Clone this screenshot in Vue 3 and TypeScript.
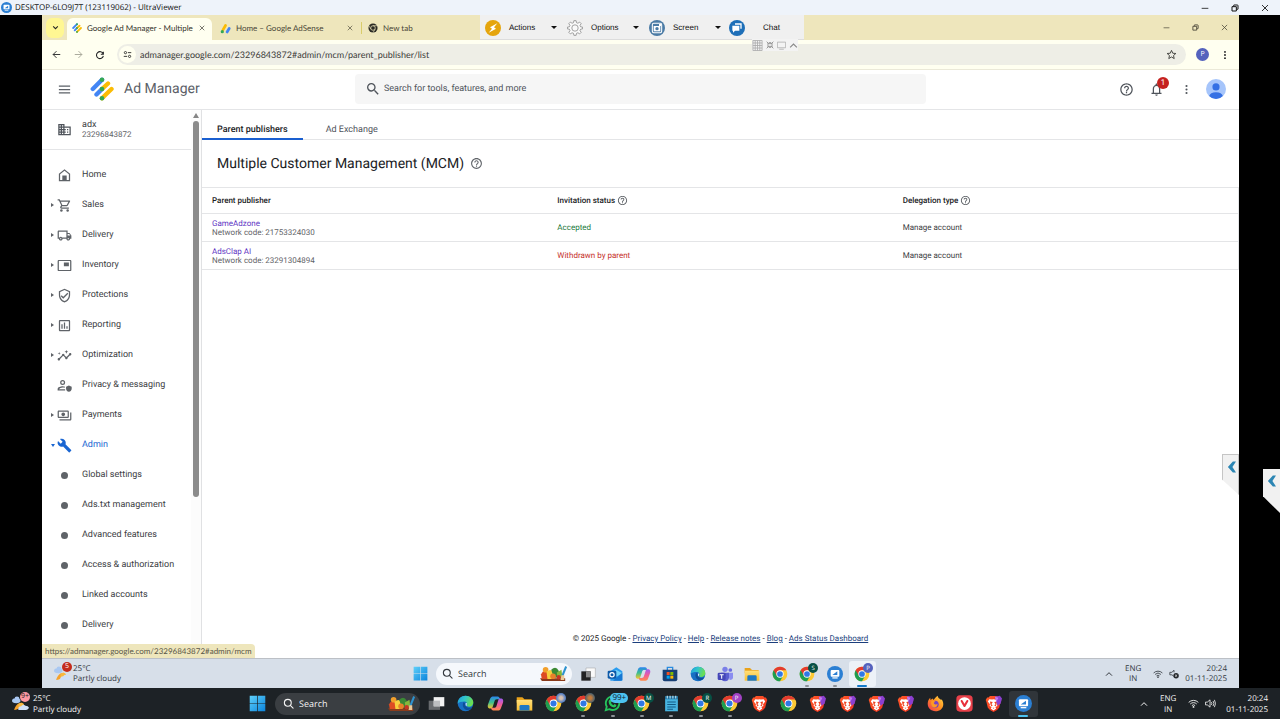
<script setup lang="ts">
import { ref } from 'vue'

interface NavItem { label: string; icon?: string; caret?: boolean; open?: boolean }
interface TaskApp { icon: string; name: string; badge?: string; badgeClass?: string; running?: boolean; active?: boolean }
interface Publisher { name: string; code: string; status: string; ok: boolean; delegation: string }

const navItems: NavItem[] = [
  { label: 'Home', icon: 'home' },
  { label: 'Sales', icon: 'cart', caret: true },
  { label: 'Delivery', icon: 'truck', caret: true },
  { label: 'Inventory', icon: 'inventory', caret: true },
  { label: 'Protections', icon: 'shield', caret: true },
  { label: 'Reporting', icon: 'report', caret: true },
  { label: 'Optimization', icon: 'insights', caret: true },
  { label: 'Privacy & messaging', icon: 'privacy' },
  { label: 'Payments', icon: 'payments', caret: true },
  { label: 'Admin', icon: 'build', open: true },
  { label: 'Global settings' },
  { label: 'Ads.txt management' },
  { label: 'Advanced features' },
  { label: 'Access & authorization' },
  { label: 'Linked accounts' },
  { label: 'Delivery' },
]

const publishers: Publisher[] = [
  { name: 'GameAdzone', code: '21753324030', status: 'Accepted', ok: true, delegation: 'Manage account' },
  { name: 'AdsClap AI', code: '23291304894', status: 'Withdrawn by parent', ok: false, delegation: 'Manage account' },
]

const footerLinks = ['Privacy Policy', 'Help', 'Release notes', 'Blog', 'Ads Status Dashboard']

const viewerTools = [
  { label: 'Actions', icon: 'bolt', menu: true },
  { label: 'Options', icon: 'gear', menu: true },
  { label: 'Screen', icon: 'camera', menu: true },
  { label: 'Chat', icon: 'chat', menu: false },
]

const remoteApps: TaskApp[] = [
  { icon: 'taskview', name: 'Task view' },
  { icon: 'outlook', name: 'Outlook' },
  { icon: 'copilot', name: 'Copilot' },
  { icon: 'store', name: 'Store' },
  { icon: 'edge', name: 'Edge' },
  { icon: 'teams', name: 'Teams' },
  { icon: 'folder', name: 'File Explorer' },
  { icon: 'chrome', name: 'Chrome' },
  { icon: 'chrome', name: 'Chrome', badge: 'S', badgeClass: 'green', running: true },
  { icon: 'viewer', name: 'UltraViewer', running: true },
  { icon: 'chrome', name: 'Chrome', badge: 'P', badgeClass: 'indigo', active: true },
]

const hostApps: TaskApp[] = [
  { icon: 'taskview-dark', name: 'Task view' },
  { icon: 'edge', name: 'Edge' },
  { icon: 'copilot', name: 'Copilot' },
  { icon: 'folder', name: 'File Explorer' },
  { icon: 'chrome', name: 'Chrome', badge: ' ', badgeClass: 'photo' },
  { icon: 'chrome', name: 'Chrome', badge: ' ', badgeClass: 'photo warm', running: true },
  { icon: 'whatsapp', name: 'WhatsApp', badge: '99+', badgeClass: 'count', running: true },
  { icon: 'chrome', name: 'Chrome', badge: 'M', badgeClass: 'green', running: true },
  { icon: 'notepad', name: 'Notepad', running: true },
  { icon: 'chrome', name: 'Chrome', badge: 'R', badgeClass: 'green', running: true },
  { icon: 'chrome', name: 'Chrome', badge: 'P', badgeClass: 'purple', running: true },
  { icon: 'brave', name: 'Brave' },
  { icon: 'chrome', name: 'Chrome' },
  { icon: 'brave-alt', name: 'Brave' },
  { icon: 'brave-alt', name: 'Brave' },
  { icon: 'brave-alt', name: 'Brave' },
  { icon: 'brave-alt', name: 'Brave' },
  { icon: 'firefox', name: 'Firefox' },
  { icon: 'vivaldi', name: 'Vivaldi' },
  { icon: 'brave-alt', name: 'Brave' },
  { icon: 'viewer', name: 'UltraViewer', active: true },
]

const address = ref('admanager.google.com/23296843872#admin/mcm/parent_publisher/list')
const query = ref('')
const remoteQuery = ref('')
const hostQuery = ref('')
</script>

<template>
  <div class="screen">
    <svg class="sprite" aria-hidden="true">
      <defs>
        <linearGradient id="g-win" x1="0" y1="0" x2="1" y2="1"><stop offset="0" stop-color="#5fd0fa" /><stop offset="1" stop-color="#0b84dc" /></linearGradient>
        <linearGradient id="g-edge" x1="0" y1="0" x2="1" y2="0.3"><stop offset="0" stop-color="#1e9de0" /><stop offset="0.5" stop-color="#32c6c9" /><stop offset="1" stop-color="#6ade52" /></linearGradient>
        <linearGradient id="g-cop1" x1="0" y1="0" x2="0" y2="1"><stop offset="0" stop-color="#2a84f0" /><stop offset="0.5" stop-color="#3cbf8e" /><stop offset="1" stop-color="#f6c52c" /></linearGradient>
        <linearGradient id="g-cop2" x1="0" y1="0" x2="0" y2="1"><stop offset="0" stop-color="#a05df0" /><stop offset="0.5" stop-color="#ef5a9c" /><stop offset="1" stop-color="#ff8a4a" /></linearGradient>
        <linearGradient id="g-fox" x1="1" y1="0" x2="0" y2="1"><stop offset="0" stop-color="#ffe14a" /><stop offset="0.5" stop-color="#ff8a1e" /><stop offset="1" stop-color="#f0325c" /></linearGradient>
        <linearGradient id="g-brave" x1="0" y1="0" x2="1" y2="1"><stop offset="0" stop-color="#ff5a2a" /><stop offset="1" stop-color="#f0301c" /></linearGradient>
        <linearGradient id="g-folder" x1="0" y1="0" x2="0" y2="1"><stop offset="0" stop-color="#ffe07a" /><stop offset="1" stop-color="#f9be32" /></linearGradient>
      </defs>
      <symbol id="i-menu" viewBox="0 0 24 24"><path d="M3 5.500h18v2H3zm0 5.500h18v2H3zm0 5.500h18v2H3z" /></symbol>
      <symbol id="i-search" viewBox="0 0 24 24"><path d="M15.5 14h-.79l-.28-.27A6.47 6.47 0 0 0 16 9.5 6.5 6.5 0 1 0 9.5 16c1.61 0 3.09-.59 4.23-1.57l.27.28v.79l5 4.99L20.49 19l-4.99-5zm-6 0C7.01 14 5 11.99 5 9.5S7.01 5 9.5 5 14 7.01 14 9.5 11.99 14 9.5 14z" /></symbol>
      <symbol id="i-find" viewBox="0 0 24 24"><g fill="none" stroke="currentColor" stroke-width="2.4" stroke-linecap="round"><circle cx="10.5" cy="10.5" r="7.5" /><path d="m16 16 6 6" /></g></symbol>
      <symbol id="i-help" viewBox="0 0 24 24"><path d="M11 18h2v-2h-2v2zm1-16C6.48 2 2 6.48 2 12s4.480 10 10 10 10-4.480 10-10S17.520 2 12 2zm0 18c-4.410 0-8-3.590-8-8s3.590-8 8-8 8 3.590 8 8-3.590 8-8 8zm0-14c-2.210 0-4 1.790-4 4h2c0-1.100.9-2 2-2s2 .9 2 2c0 2-3 1.750-3 5h2c0-2.250 3-2.500 3-5 0-2.210-1.790-4-4-4z" /></symbol>
      <symbol id="i-bell" viewBox="0 0 24 24"><path d="M12 22c1.100 0 2-.9 2-2h-4c0 1.100.9 2 2 2zm6-5v-6c0-3.070-1.630-5.640-4.500-6.320V4c0-.83-.67-1.500-1.500-1.500s-1.500.67-1.500 1.500v.68C7.640 5.360 6 7.920 6 11v6H4v2h16v-2h-2zm-2 0H8v-6c0-2.480 1.510-4.500 4-4.500s4 2.020 4 4.500v6z" /></symbol>
      <symbol id="i-more" viewBox="0 0 24 24"><circle cx="12" cy="4.500" r="2.300" /><circle cx="12" cy="12" r="2.300" /><circle cx="12" cy="19.500" r="2.300" /></symbol>
      <symbol id="i-domain" viewBox="0 0 24 24"><path d="M12 7V3H2v18h20V7H12zM6 19H4v-2h2v2zm0-4H4v-2h2v2zm0-4H4V9h2v2zm0-4H4V5h2v2zm4 12H8v-2h2v2zm0-4H8v-2h2v2zm0-4H8V9h2v2zm0-4H8V5h2v2zm10 12h-8v-2h2v-2h-2v-2h2v-2h-2V9h8v10zm-2-8h-2v2h2v-2zm0 4h-2v2h2v-2z" /></symbol>
      <symbol id="i-home" viewBox="0 0 24 24"><path d="M12 2 3 9v12h18V9zm7 17H5V10l7-5.500 7 5.500z" /><path d="M8.500 12h7v8h-7z" /></symbol>
      <symbol id="i-cart" viewBox="0 0 24 24"><path d="M15.550 13c.75 0 1.410-.41 1.750-1.030l3.580-6.490A.996.996 0 0 0 20.010 4H5.210l-.94-2H1v2h2l3.600 7.590-1.350 2.440C4.520 15.370 5.480 17 7 17h12v-2H7l1.100-2h7.450zM6.160 6h12.150l-2.760 5H8.530L6.160 6z" /><circle cx="7" cy="20" r="2" /><circle cx="17" cy="20" r="2" /></symbol>
      <symbol id="i-truck" viewBox="0 0 24 24"><path d="M20 8h-3V4H3c-1.100 0-2 .9-2 2v11h2c0 1.660 1.340 3 3 3s3-1.340 3-3h6c0 1.660 1.340 3 3 3s3-1.340 3-3h2v-5l-3-4zm-.5 1.500l1.960 2.500H17V9.500h2.500zM6 18c-.55 0-1-.45-1-1s.45-1 1-1 1 .45 1 1-.45 1-1 1zm2.220-3c-.55-.61-1.330-1-2.220-1s-1.670.39-2.220 1H3V6h12v9H8.220zM18 18c-.55 0-1-.45-1-1s.45-1 1-1 1 .45 1 1-.45 1-1 1z" /></symbol>
      <symbol id="i-inventory" viewBox="0 0 24 24"><path d="M19 7h-8v6h8V7zm2-4H3c-1.100 0-2 .9-2 2v14c0 1.100.9 1.980 2 1.980h18c1.100 0 2-.88 2-1.980V5c0-1.100-.9-2-2-2zm0 16.010H3V4.980h18v14.030z" /></symbol>
      <symbol id="i-shield" viewBox="0 0 24 24"><path d="M12 1 3 5v6c0 5.550 3.840 10.740 9 12 5.160-1.260 9-6.450 9-12V5l-9-4zm7 10c0 4.520-2.980 8.690-7 9.930-4.020-1.240-7-5.410-7-9.930V6.300l7-3.110 7 3.110V11zm-11.590.59L6 13l4 4 8-8-1.410-1.420L10 14.170z" /></symbol>
      <symbol id="i-report" viewBox="0 0 24 24"><path d="M19 3H5c-1.100 0-2 .9-2 2v14c0 1.100.9 2 2 2h14c1.100 0 2-.9 2-2V5c0-1.100-.9-2-2-2zm0 16H5V5h14v14zM7 10h2v7H7zm4-3h2v10h-2zm4 6h2v4h-2z" /></symbol>
      <symbol id="i-insights" viewBox="0 0 24 24"><path d="M21 8c-1.450 0-2.260 1.440-1.930 2.510l-3.550 3.560c-.3-.09-.74-.09-1.040 0l-2.550-2.550C12.270 10.450 11.460 9 10 9c-1.450 0-2.270 1.440-1.930 2.520l-4.560 4.550C2.440 15.740 1 16.550 1 18c0 1.100.9 2 2 2 1.450 0 2.260-1.440 1.930-2.510l4.550-4.560c.3.09.74.09 1.040 0l2.550 2.550C12.730 16.550 13.540 18 15 18c1.450 0 2.270-1.440 1.930-2.520l3.560-3.550C21.560 12.260 23 11.450 23 10c0-1.100-.9-2-2-2zM15 9l.94-2.070L18 6l-2.060-.93L15 3l-.92 2.070L12 6l2.080.93zM3.500 11 4 9l2-.5L4 8l-.5-2L3 8l-2 .5L3 9z" /></symbol>
      <symbol id="i-privacy" viewBox="0 0 24 24"><path d="M9 3a4 4 0 1 0 0 8 4 4 0 0 0 0-8zm0 2a2 2 0 1 1 0 4 2 2 0 0 1 0-4zM9 13c-3 0-8 1.500-8 4.500V20h12v-2H3.200c.5-1.500 3.500-3 5.800-3 1 0 2 .2 3 .6l1-1.800C11.700 13.300 10.300 13 9 13z" /><path d="m19 12 4.500 1.800v3.200c0 2.300-1.800 4.300-4.500 5-2.700-.7-4.500-2.700-4.500-5v-3.200z" /></symbol>
      <symbol id="i-payments" viewBox="0 0 24 24"><path d="M19 14V6c0-1.100-.9-2-2-2H3c-1.100 0-2 .9-2 2v8c0 1.100.9 2 2 2h14c1.100 0 2-.9 2-2zm-2 0H3V6h14v8zm-7-7c-1.660 0-3 1.340-3 3s1.340 3 3 3 3-1.340 3-3-1.340-3-3-3zm13 0v11c0 1.100-.9 2-2 2H4v-2h17V7h2z" /></symbol>
      <symbol id="i-build" viewBox="0 0 24 24"><path d="M22.700 19l-9.100-9.100c.9-2.300.4-5-1.500-6.900-2-2-5-2.400-7.400-1.300L9 6 6 9 1.600 4.700C.4 7.100.9 10.100 2.900 12.100c1.900 1.900 4.600 2.400 6.900 1.500l9.100 9.100c.4.400 1 .4 1.400 0l2.300-2.300c.5-.4.5-1.100.1-1.400z" /></symbol>
      <symbol id="i-star" viewBox="0 0 24 24"><path fill="none" stroke="currentColor" stroke-width="2" d="m12 3 2.700 6.200 6.800.6-5.100 4.500 1.500 6.600L12 17.400l-5.900 3.500 1.500-6.600-5.100-4.500 6.800-.6z" /></symbol>
      <symbol id="i-back" viewBox="0 0 24 24"><path fill="none" stroke="currentColor" stroke-width="2.400" d="M22 12H3m9-9-9 9 9 9" /></symbol>
      <symbol id="i-forward" viewBox="0 0 24 24"><path fill="none" stroke="currentColor" stroke-width="2.200" d="M2 12h19m-9-9 9 9-9 9" /></symbol>
      <symbol id="i-reload" viewBox="0 0 24 24"><path fill="none" stroke="currentColor" stroke-width="2.600" d="M20 4v6h-6m5.500-1A8.300 8.300 0 1 0 20 14" /></symbol>
      <symbol id="i-tune" viewBox="0 0 24 24"><g fill="none" stroke="currentColor" stroke-width="2.600"><circle cx="6.500" cy="7" r="3" /><path d="M13 7h9M2 17h9" /><circle cx="17.500" cy="17" r="3" /></g></symbol>
      <symbol id="i-down" viewBox="0 0 24 24"><path fill="none" stroke="currentColor" stroke-width="3.500" d="m4 8 8 8 8-8" /></symbol>
      <symbol id="i-up" viewBox="0 0 24 24"><path fill="none" stroke="currentColor" stroke-width="3" d="m3 17 9-9 9 9" /></symbol>
      <symbol id="i-close" viewBox="0 0 24 24"><path fill="none" stroke="currentColor" stroke-width="2.600" d="m3 3 18 18M21 3 3 21" /></symbol>
      <symbol id="i-min" viewBox="0 0 24 24"><path fill="none" stroke="currentColor" stroke-width="2.400" d="M2 13h20" /></symbol>
      <symbol id="i-restore" viewBox="0 0 24 24"><path fill="none" stroke="currentColor" stroke-width="3" d="M3 8h13v13H3zM8 7V4q0-1 1-1h10q2 0 2 2v10q0 1-1 1h-3" /></symbol>
      <symbol id="i-wifi" viewBox="0 0 24 24"><g fill="none" stroke="currentColor" stroke-width="2"><path d="M1.500 9.500a15 15 0 0 1 21 0M5 13a10 10 0 0 1 14 0M8.500 16.500a5 5 0 0 1 7 0" /></g><circle cx="12" cy="19.500" r="2" fill="currentColor" /></symbol>
      <symbol id="i-sound" viewBox="0 0 24 24"><g fill="none" stroke="currentColor" stroke-width="1.800"><path d="M1 9h4l6-5v16l-6-5H1zM14 9q2 3 0 6M17.500 6.500q4 5.500 0 11M20.500 4q5 8 0 16" /></g></symbol>
      <symbol id="i-muted" viewBox="0 0 24 24"><path fill="none" stroke="currentColor" stroke-width="2" d="M11 17 7 14H2V8h5l5-5v5" /><circle cx="17" cy="16" r="6.500" fill="#24282c" /><path stroke="#fff" stroke-width="1.600" d="m14.500 13.500 5 5m0-5-5 5" /></symbol>
      <symbol id="i-admanager" viewBox="0 0 24 24"><g stroke-width="4.400" stroke-linecap="round"><path stroke="#4285f4" d="M12 2.800 2.800 12M12 12l-5.500 5.500" /><path stroke="#fbbc04" d="M12 12l6-5.500M12 21.300l9.500-9.300" /></g><g fill="#34a853"><circle cx="12" cy="2.800" r="2.300" /><circle cx="12" cy="12" r="2.300" /><circle cx="12" cy="21.300" r="2.300" /></g></symbol>
      <symbol id="i-adsense" viewBox="0 0 24 24"><g stroke-width="6" stroke-linecap="round"><path stroke="#fbbc04" d="M6.500 15 12 5.500" /><path stroke="#4285f4" d="M15.500 19.500 20 12" /></g><circle cx="5" cy="19" r="3.500" fill="#34a853" /></symbol>
      <symbol id="i-newtab" viewBox="0 0 24 24"><circle cx="12" cy="12" r="11" fill="#2b2b25" /><circle cx="12" cy="12" r="5.500" fill="none" stroke="#eee6bc" stroke-width="1.800" /><path stroke="#eee6bc" stroke-width="1.500" d="M12 6.500h10M7 15 2.500 7M17 15l-5 8" /></symbol>
      <symbol id="i-user" viewBox="0 0 24 24"><circle cx="12" cy="12" r="12" fill="#a6c5fb" /><circle cx="12" cy="9.500" r="4.300" fill="#3570e4" /><path fill="#3570e4" d="M3.800 20.500Q5 15.800 12 15.800t8.200 4.700Q17 24 12 24t-8.200-3.500z" /></symbol>
      <symbol id="i-bolt" viewBox="0 0 24 24"><circle cx="12" cy="12" r="12" fill="#e5a50e" /><path fill="#fff" d="m18.500 5-11 6 3 2-5 6 11-6-3-2z" /></symbol>
      <symbol id="i-gear" viewBox="0 0 24 24"><path fill="#fafafa" stroke="#777" stroke-width="1" stroke-linejoin="round" d="M10.300 1h3.400l.5 3 2.200.9 2.500-1.800 2.400 2.400-1.800 2.500.9 2.200 3 .5v2.600l-3 .5-.9 2.200 1.800 2.500-2.400 2.400-2.500-1.800-2.200.9-.5 3h-3.400l-.5-3-2.200-.9-2.500 1.800-2.400-2.400 1.800-2.500-.9-2.200-3-.5v-2.600l3-.5.9-2.200-1.800-2.500 2.400-2.400 2.500 1.800 2.200-.9z" /><circle cx="12" cy="12" r="4.800" fill="none" stroke="#777" /></symbol>
      <symbol id="i-camera" viewBox="0 0 24 24"><circle cx="12" cy="12" r="12" fill="#4b7ba5" /><rect x="5" y="5" width="14" height="14" rx="2" fill="none" stroke="#fff" stroke-width="1.600" /><path fill="#fff" d="M7 9h10v8H7z" /><circle cx="12" cy="13" r="2.500" fill="#4b7ba5" /><path fill="#fff" d="M15 6h3v3h-3z" /></symbol>
      <symbol id="i-chat" viewBox="0 0 24 24"><circle cx="12" cy="12" r="12" fill="#1e6fb8" /><path fill="#fff" d="M9 5h10v8h-2V7H9zM5 8.500h10.500V16H9l-3 3v-3H5z" /></symbol>
      <symbol id="i-viewer" viewBox="0 0 24 24"><circle cx="12" cy="12" r="12" fill="#2b7fd3" /><rect x="5.500" y="6" width="13" height="10" rx="1.500" fill="#fff" /><path fill="#2b7fd3" d="M8 13.500 15.500 8v5.500z" /><path fill="#fff" d="M8 17h8v1.800H8z" /></symbol>
      <symbol id="i-grid" viewBox="0 0 24 24"><path fill="none" stroke="#aaa" stroke-width="1.800" d="M2 1h20v22H2zM2 6.500h20M2 12h20M2 17.500h20M7 1v22M12 1v22M17 1v22" /></symbol>
      <symbol id="i-expand" viewBox="0 0 24 24"><path fill="none" stroke="#999" stroke-width="3" d="m2 2 7 7m6 6 7 7M22 2l-7 7m-6 6-7 7M3 9h7V3m11 6h-7V3M3 15h7v6m11-6h-7v6" /></symbol>
      <symbol id="i-monitor" viewBox="0 0 24 24"><path fill="none" stroke="#aaa" stroke-width="2" d="M1 3h22v15H1zm5 19h12" /></symbol>
      <symbol id="i-win" viewBox="0 0 24 24"><path fill="url(#g-win)" d="M1 1h10.500v10.500H1zm11.500 0H23v10.500H12.500zM1 12.500h10.500V23H1zm11.500 0H23V23H12.500z" /></symbol>
      <symbol id="i-taskview" viewBox="0 0 24 24"><path fill="#fafafa" stroke="#999" stroke-width=".7" d="M9 3h14v14H9z" /><path fill="#222" d="M2 8h14v14H2z" /><path fill="#888" d="M9 8h7v9H9z" /></symbol>
      <symbol id="i-taskview-dark" viewBox="0 0 24 24"><path fill="#686b6e" d="M1 8h16v13H1z" /><path fill="#f2f2f2" d="M8 3h15v13H8z" /><path fill="#bdbfc1" d="M8 8h9v8H8z" /></symbol>
      <symbol id="i-edge" viewBox="0 0 24 24"><circle cx="12" cy="12" r="11" fill="#1770c4" /><path fill="url(#g-edge)" d="M1 12C1 5 6 1 12 1c7 0 11 5 11 9.500 0 4-3 6-6 6-2.500 0-3.500-1-3-2 1-1.500.5-5.500-4-5.500-4 0-8 1-9 3z" /><path fill="#0e4f99" d="M9.500 10C7 13 8 19 13 21c4 1 7-1 8.500-4-5 2.500-11 0-10-5z" /><path fill="#eaf6ff" d="M12 12c1-1.500 2-.5 2 .5-.5 1.500-.8 2.700 0 3.300l-1.500-.8z" /></symbol>
      <symbol id="i-copilot" viewBox="0 0 24 24"><path fill="url(#g-cop1)" d="M9 2h6c2 0 3 2 3.500 4H14c-2 0-3 1-3.500 3L8 17c-.5 1.500-1.500 2-3 2-4 0-4.500-3-3.500-6L4.500 5C5.300 2.800 7 2 9 2z" /><path fill="url(#g-cop2)" d="M15 22H9c-2 0-3-2-3.500-4H10c2 0 3-1 3.500-3L16 7c.5-1.500 1.500-2 3-2 4 0 4.500 3 3.500 6l-3 8c-.8 2.200-2.500 3-4.500 3z" /></symbol>
      <symbol id="i-folder" viewBox="0 0 24 24"><path fill="#e9a21b" d="M1 3h8l3 3h10v5H1z" /><path fill="url(#g-folder)" d="M1 7h22v15H1z" /><path fill="#1d78c4" d="M5 16q0-2 2-2h10q2 0 2 2v6H5z" /></symbol>
      <symbol id="i-store" viewBox="0 0 24 24"><path fill="none" stroke="#2b8ce0" stroke-width="2" d="M8 6V2h8v4" /><path fill="#173f74" d="M1 5.500h22V20q0 3-3 3H4q-3 0-3-3z" /><path fill="#f25022" d="M7 9h4.500v4.500H7z" /><path fill="#7fba00" d="M12.500 9H17v4.500h-4.500z" /><path fill="#00a4ef" d="M7 14.500h4.500V19H7z" /><path fill="#ffb900" d="M12.500 14.500H17V19h-4.500z" /></symbol>
      <symbol id="i-outlook" viewBox="0 0 24 24"><path fill="#2a9df0" d="M5 8 14 2l9 6v14H5z" /><path fill="#73d2f8" d="m6 9 8-3 9 5-9 5z" /><path fill="#1677d2" d="m23 10-14 12h12q2 0 2-2z" /><rect x="1" y="7" width="13" height="12" rx="2" fill="#0c59a8" /><circle cx="7.500" cy="13" r="3.200" fill="none" stroke="#fff" stroke-width="1.800" /></symbol>
      <symbol id="i-teams" viewBox="0 0 24 24"><circle cx="12" cy="5" r="4" fill="#7a7fe8" /><circle cx="20" cy="6" r="2.800" fill="#6a6ce0" /><path fill="#8a8df0" d="M16 10h8v7q0 4-5 4z" /><path fill="#5b5fd0" d="M6 10h12v7q0 6-6 6t-6-6z" /><rect x="1" y="10" width="12" height="11" rx="2" fill="#4446b8" /><path stroke="#fff" stroke-width="1.600" d="M4 13h6m-3 0v6" /></symbol>
      <symbol id="i-chrome" viewBox="0 0 24 24"><circle cx="12" cy="12" r="11" fill="#fcc934" /><path fill="#1e9e50" d="M2.470 6.500A11 11 0 0 0 12 23l4.760-8.250L12 12z" /><path fill="#e33b2e" d="M2.470 6.500A11 11 0 0 1 21.530 6.500H12l-4.760 8.250z" /><circle cx="12" cy="12" r="5.500" fill="#fff" /><circle cx="12" cy="12" r="4.300" fill="#2f78e6" /></symbol>
      <symbol id="i-whatsapp" viewBox="0 0 24 24"><path fill="none" stroke="#25c45c" stroke-width="2.600" d="m2.500 21.500 1.400-5A9.500 9.500 0 1 1 7.500 20z" /><path fill="#25c45c" d="M8 6.500 10 7l1 2.500-1.200 1.500q1.200 2.300 3.500 3.300l1.500-1.500 2.700 1.200q0 3.500-3.500 3.500Q7 16 6.500 9.500 6.500 7.500 8 6.500z" /></symbol>
      <symbol id="i-notepad" viewBox="0 0 24 24"><path fill="#48b4e0" d="M3 2h18v21H3z" /><path fill="#1e6f9e" d="M3 2h18v4H3z" /><path stroke="#d6f1fb" stroke-width="1.400" d="M6 1v4m4-4v4m4-4v4m4-4v4" /><path stroke="#125b86" stroke-width="1.500" d="M6 10h12M6 13.500h12M6 17h12M6 20h8" /></symbol>
      <symbol id="i-brave" viewBox="0 0 24 24"><path fill="url(#g-brave)" d="m7 1.500 10 0 2 2h2l2 3.500-1 3-2 8-3 3-5 3-5-3-3-3-2-8-1-3L3 3.500h2z" /><path fill="#fff" d="m6 6 4 .5 2-.5 2 .5 4-.5 2 3-3 4 .5 2.500-3 1.500L16 19l-4 3-4-3 1.500-2-3-1.500.5-2.500-3-4z" /><path fill="#f0401e" d="m7 9 4 1-2 3 2 1.500-2 1.500L8 14zm10 0-4 1 2 3-2 1.500 2 1.500 1-2zm-6.500 9h3L12 19.500z" /></symbol>
      <symbol id="i-brave-alt" viewBox="0 0 24 24"><use href="#i-brave" /><path fill="#8b3fd0" d="M14 2.500 21 1l3 4-2 7-4 3-2-5z" /><path fill="#c27af0" d="m14 2.500 5 1.500-3 6z" /></symbol>
      <symbol id="i-firefox" viewBox="0 0 24 24"><path fill="url(#g-fox)" d="M12 23C5.500 23 1 18.500 1 12.500 1 9 2.500 6 4.500 4L5 7l3-2 1 2c1.500-1 2.500-4 6-6 0 3 3 4 5 6l.5-1c1.500 2 2.500 4 2.500 7 0 6-5 10-11 10z" /><circle cx="11.500" cy="13" r="5" fill="#7542c8" /><path fill="#ff9a24" d="M6 9c3-2 5-.5 6 1-3 0-3 2-1 3 1.500 1 3 .5 4-.5 0 4-3 5.500-5 5-3-.5-5-4-4-8.500z" /></symbol>
      <symbol id="i-vivaldi" viewBox="0 0 24 24"><rect x="0.500" y="0.500" width="23" height="23" rx="5" fill="#e8404a" /><circle cx="12" cy="12" r="9" fill="#fff" /><path fill="none" stroke="#e8303c" stroke-width="3" stroke-linecap="round" stroke-linejoin="round" d="m8 8.500 4 7 4-7" /></symbol>
      <symbol id="i-weather" viewBox="0 0 24 24"><path fill="#f5a22c" d="M3 21c2-6 5-10 11-10-1 5-4 10-11 10z" /><circle cx="13" cy="15" r="4" fill="#f8b840" /><g fill="#a9c8f2"><ellipse cx="6" cy="8" rx="6" ry="3.500" /><circle cx="7" cy="5.500" r="3.500" /></g><path fill="#cfdff8" d="M9 21q-1-5 4-5 2-4 6-1 4 0 5 3-1 3-4 3z" /></symbol>
      <symbol id="i-feast" viewBox="0 0 30 16"><path fill="#8a3b1c" d="M0 13h27v3H2z" /><path fill="#dd4b24" d="M1 9q3-6 7-2l2 7H2z" /><circle cx="6" cy="4" r="3" fill="#f2a02c" /><path fill="#f7cf3f" d="M7 6q5-4 8 1l-2 7H8z" /><path fill="#3b8a35" d="M12 4q5-5 8 1l1 6-6 2z" /><path fill="#86b83c" d="m18 7 5-3 1 8-5 2z" /><circle cx="14" cy="11" r="3" fill="#e8812a" /><circle cx="20" cy="12" r="2.300" fill="#c73525" /><path fill="#2d92cf" d="m27 0 2 1-4 10-2-1z" /><path fill="#ecc894" d="M23 10h3v5h-4z" /></symbol>
      <symbol id="i-chev" viewBox="0 0 10 12"><path fill="#2c86b4" d="M6.500 0H10L6 6l4 6H6.500L1 6z" /></symbol>
    </svg>

    <header class="titlebar">
      <svg class="s11"><use href="#i-viewer" /></svg>
      <span class="title-text">DESKTOP-6LO9J7T (123119062) - UltraViewer</span>
      <div class="win-buttons">
        <button type="button" aria-label="Minimize"><svg class="s8"><use href="#i-min" /></svg></button>
        <button type="button" aria-label="Restore"><svg class="s8"><use href="#i-restore" /></svg></button>
        <button type="button" aria-label="Close"><svg class="s8"><use href="#i-close" /></svg></button>
      </div>
    </header>

    <section class="remote">
      <div class="tabstrip">
        <button type="button" class="tab-search" aria-label="Search tabs"><svg class="s7"><use href="#i-down" /></svg></button>
        <div class="tab active">
          <svg class="s10"><use href="#i-admanager" /></svg>
          <span class="tab-title">Google Ad Manager - Multiple</span>
          <button type="button" aria-label="Close tab"><svg class="s6"><use href="#i-close" /></svg></button>
        </div>
        <div class="tab second">
          <svg class="s11"><use href="#i-adsense" /></svg>
          <span class="tab-title">Home – Google AdSense</span>
          <button type="button" aria-label="Close tab"><svg class="s6"><use href="#i-close" /></svg></button>
        </div>
        <div class="tab third">
          <svg class="s10"><use href="#i-newtab" /></svg>
          <span class="tab-title">New tab</span>
        </div>
        <div class="win-buttons narrow">
          <button type="button" aria-label="Minimize"><svg class="s7"><use href="#i-min" /></svg></button>
          <button type="button" aria-label="Restore"><svg class="s7"><use href="#i-restore" /></svg></button>
          <button type="button" aria-label="Close"><svg class="s7"><use href="#i-close" /></svg></button>
        </div>
      </div>

      <div class="toolbar">
        <button type="button" class="nav-btn" aria-label="Back"><svg class="s9"><use href="#i-back" /></svg></button>
        <button type="button" class="nav-btn dim" aria-label="Forward"><svg class="s9"><use href="#i-forward" /></svg></button>
        <button type="button" class="nav-btn" aria-label="Reload"><svg class="s10"><use href="#i-reload" /></svg></button>
        <div class="omnibox">
          <button type="button" class="site-info" aria-label="Site information"><svg class="s9"><use href="#i-tune" /></svg></button>
          <input v-model="address" type="text" aria-label="Address" />
          <button type="button" aria-label="Bookmark"><svg class="s11"><use href="#i-star" /></svg></button>
        </div>
        <button type="button" class="profile" aria-label="Profile">P</button>
        <button type="button" class="chrome-menu" aria-label="Menu"><svg class="s10"><use href="#i-more" /></svg></button>
      </div>

      <div class="viewer-bar">
        <div v-for="tool in viewerTools" :key="tool.label" class="tool" :class="{ last: !tool.menu }">
          <button type="button"><svg class="s16"><use :href="'#i-' + tool.icon" /></svg><span>{{ tool.label }}</span></button>
          <i v-if="tool.menu" class="drop"></i>
        </div>
      </div>
      <div class="viewer-mini">
        <svg class="s11"><use href="#i-grid" /></svg>
        <svg class="s8"><use href="#i-expand" /></svg>
        <svg class="s9"><use href="#i-monitor" /></svg>
        <svg class="s9"><use href="#i-up" /></svg>
      </div>

      <div class="app-header">
        <div class="brand">
          <button type="button" aria-label="Main menu"><svg class="s15"><use href="#i-menu" /></svg></button>
          <svg class="s24"><use href="#i-admanager" /></svg>
          <span>Ad Manager</span>
        </div>
        <label class="app-search">
          <svg class="s16"><use href="#i-search" /></svg>
          <input v-model="query" type="text" placeholder="Search for tools, features, and more" aria-label="Search for tools, features, and more" />
        </label>
        <div class="header-actions">
          <button type="button" aria-label="Help"><svg class="s15"><use href="#i-help" /></svg></button>
          <button type="button" aria-label="Notifications"><svg class="s15"><use href="#i-bell" /></svg><span class="alert">1</span></button>
          <button type="button" aria-label="More"><svg class="s11"><use href="#i-more" /></svg></button>
          <button type="button" aria-label="Account"><svg class="s20"><use href="#i-user" /></svg></button>
        </div>
      </div>

      <div class="app-body">
        <aside class="sidebar">
          <div class="side-content">
            <div class="account">
              <svg class="s15"><use href="#i-domain" /></svg>
              <div><p>adx</p><p class="code">23296843872</p></div>
            </div>
            <nav>
              <a v-for="(item, index) in navItems" :key="index" href="#" :class="{ open: item.open }">
                <i class="caret" :class="{ shown: item.caret, down: item.open }"></i>
                <svg v-if="item.icon" class="s15"><use :href="'#i-' + item.icon" /></svg>
                <i v-else class="dot"></i>
                <span>{{ item.label }}</span>
              </a>
            </nav>
          </div>
          <div class="scroll-track"><i class="scroll-arrow"></i><i class="scroll-thumb"></i></div>
        </aside>

        <main>
          <div class="page-tabs" role="tablist">
            <button type="button" role="tab" aria-selected="true">Parent publishers</button>
            <button type="button" role="tab" aria-selected="false">Ad Exchange</button>
          </div>
          <h1>Multiple Customer Management (MCM) <svg class="s13"><use href="#i-help" /></svg></h1>
          <table>
            <thead>
              <tr>
                <th>Parent publisher</th>
                <th>Invitation status <svg class="s11"><use href="#i-help" /></svg></th>
                <th>Delegation type <svg class="s11"><use href="#i-help" /></svg></th>
              </tr>
            </thead>
            <tbody>
              <tr v-for="row in publishers" :key="row.code">
                <td><a href="#">{{ row.name }}</a><p>Network code: {{ row.code }}</p></td>
                <td :class="row.ok ? 'ok' : 'bad'">{{ row.status }}</td>
                <td>{{ row.delegation }}</td>
              </tr>
            </tbody>
          </table>
          <footer>© 2025 Google<template v-for="link in footerLinks" :key="link"> - <a href="#">{{ link }}</a></template></footer>
        </main>
      </div>

      <div class="status-bubble">https://admanager.google.com/23296843872#admin/mcm</div>
      <button type="button" class="flap inner" aria-label="Show panel"><svg class="chev"><use href="#i-chev" /></svg></button>

      <div class="taskbar light">
        <div class="weather">
          <span class="w-icon"><svg class="s17"><use href="#i-weather" /></svg><b>5</b></span>
          <div><p>25°C</p><p>Partly cloudy</p></div>
        </div>
        <div class="task-center">
          <button type="button" aria-label="Start" class="start"><svg class="s15"><use href="#i-win" /></svg></button>
          <label class="task-search">
            <svg class="s11"><use href="#i-find" /></svg>
            <input v-model="remoteQuery" type="text" placeholder="Search" aria-label="Search remote desktop" />
            <svg class="feast"><use href="#i-feast" /></svg>
          </label>
          <div class="apps">
            <button v-for="(app, index) in remoteApps" :key="index" type="button" :aria-label="app.name" :class="{ running: app.running, active: app.active }">
              <svg class="s16"><use :href="'#i-' + app.icon" /></svg>
              <span v-if="app.badge" class="badge" :class="app.badgeClass">{{ app.badge }}</span>
            </button>
          </div>
        </div>
        <div class="tray">
          <svg class="s8"><use href="#i-up" /></svg>
          <div class="lang"><p>ENG</p><p>IN</p></div>
          <svg class="s10"><use href="#i-wifi" /></svg>
          <svg class="s10"><use href="#i-muted" /></svg>
          <div class="clock"><p>20:24</p><p>01-11-2025</p></div>
        </div>
      </div>
    </section>

    <div class="taskbar dark">
      <div class="weather">
        <span class="w-icon"><svg class="s17"><use href="#i-weather" /></svg><b>9+</b></span>
        <div><p>25°C</p><p>Partly cloudy</p></div>
      </div>
      <div class="task-center">
        <button type="button" aria-label="Start" class="start"><svg class="s17"><use href="#i-win" /></svg></button>
        <label class="task-search">
          <svg class="s11"><use href="#i-find" /></svg>
          <input v-model="hostQuery" type="text" placeholder="Search" aria-label="Search this computer" />
          <svg class="feast"><use href="#i-feast" /></svg>
        </label>
        <div class="apps">
          <button v-for="(app, index) in hostApps" :key="index" type="button" :aria-label="app.name" :class="{ running: app.running, active: app.active }">
            <svg class="s17"><use :href="'#i-' + app.icon" /></svg>
            <span v-if="app.badge" class="badge" :class="app.badgeClass">{{ app.badge }}</span>
          </button>
        </div>
      </div>
      <div class="tray">
        <svg class="s8"><use href="#i-up" /></svg>
        <div class="lang"><p>ENG</p><p>IN</p></div>
        <svg class="s11"><use href="#i-wifi" /></svg>
        <svg class="s11"><use href="#i-sound" /></svg>
        <div class="clock"><p>20:24</p><p>01-11-2025</p></div>
      </div>
    </div>

    <button type="button" class="flap outer" aria-label="Show viewer panel"><svg class="chev"><use href="#i-chev" /></svg></button>
  </div>
</template>

<style>
body {
  background: #000;
}
</style>

<style scoped>
* {
  box-sizing: border-box;
}
.screen {
  position: relative;
  display: flex;
  flex-direction: column;
  min-height: 100vh;
  overflow: hidden;
  background: #000;
  color: #202124;
  font-family: 'Open Sans', 'Noto Sans', sans-serif;
  font-size: 8px;
  line-height: 10px;
  text-rendering: geometricPrecision;
}
.sprite {
  position: absolute;
  width: 0;
  height: 0;
}
button {
  display: flex;
  align-items: center;
  justify-content: center;
  padding: 0;
  border: 0;
  background: none;
  color: inherit;
  font: inherit;
  text-rendering: inherit;
}
input {
  min-width: 0;
  flex: 1;
  padding: 0;
  border: 0;
  outline: 0;
  background: none;
  color: inherit;
  font: inherit;
  text-rendering: inherit;
}
p, h1 {
  margin: 0;
}
a {
  color: inherit;
  text-decoration: none;
}
svg {
  flex: none;
  fill: currentColor;
}
.s6 { width: 6px; height: 6px; }
.s7 { width: 7px; height: 7px; }
.s8 { width: 8px; height: 8px; }
.s9 { width: 9px; height: 9px; }
.s10 { width: 10px; height: 10px; }
.s11 { width: 11px; height: 11px; }
.s13 { width: 13px; height: 13px; }
.s15 { width: 15px; height: 15px; }
.s16 { width: 16px; height: 16px; }
.s17 { width: 17px; height: 17px; }
.s20 { width: 20px; height: 20px; }
.s24 { width: 24px; height: 24px; }

.titlebar {
  display: flex;
  align-items: center;
  height: 15px;
  padding-left: 1px;
  background: #eef3fa;
  color: #111;
}
.title-text {
  margin-left: 3px;
}
.win-buttons {
  display: flex;
  margin-left: auto;
}
.win-buttons button {
  width: 30px;
  height: 14px;
}
.win-buttons.narrow {
  align-self: center;
}
.win-buttons.narrow button {
  width: 29px;
}

.remote {
  position: relative;
  display: flex;
  flex: 1;
  flex-direction: column;
  margin: 0 41px 0 42px;
  background: #fff;
}
.tabstrip {
  display: flex;
  align-items: flex-end;
  height: 25px;
  padding-left: 4px;
  background: #eee6bc;
  color: #4a4738;
  font-family: Lato, 'Open Sans', sans-serif;
}
.tab-search {
  align-self: center;
  width: 18px;
  height: 20px;
  border-radius: 6px;
  background: #fff793;
  color: #222;
}
.tab {
  display: flex;
  align-items: center;
  gap: 5px;
  height: 12px;
  margin-bottom: 6px;
}
.tab.active {
  width: 145px;
  height: 22px;
  margin: 0 0 0 3px;
  padding: 0 7px 2px 5px;
  border-radius: 6px 6px 0 0;
  background: #fffff0;
  color: #33322a;
}
.tab.second {
  width: 150px;
  padding: 0 8px;
  border-right: 1px solid #d9cc6a;
}
.tab.third {
  padding-left: 6px;
}
.tab-title {
  flex: 1;
  white-space: nowrap;
}
.toolbar {
  display: flex;
  align-items: center;
  height: 30px;
  padding: 0 4px 0 3px;
  border-bottom: 1px solid #ebe9d8;
  background: #fffff0;
}
.nav-btn {
  width: 22px;
  height: 20px;
}
.dim {
  color: #9a9a8c;
}
.omnibox {
  display: flex;
  flex: 1;
  align-items: center;
  gap: 4px;
  height: 21px;
  margin-left: 6px;
  padding: 0 9px 0 2px;
  border-radius: 11px;
  background: #eeeee6;
  color: #3b3b38;
  font: 9px/12px Lato, sans-serif;
}
.site-info {
  width: 17px;
  height: 17px;
  border-radius: 9px;
  background: #fffff0;
}
.profile {
  width: 13px;
  height: 13px;
  margin-left: 10px;
  border-radius: 7px;
  background: #5462bd;
  color: #fff;
  font-size: 7px;
}
.chrome-menu {
  width: 20px;
  height: 20px;
  margin-left: 6px;
}

.viewer-bar {
  position: absolute;
  top: 0;
  left: 438px;
  display: flex;
  width: 324px;
  height: 25px;
  border-bottom: 1px solid #ddd;
  background: #f0f0f0;
  color: #111;
  font-family: 'Liberation Sans', Arial, sans-serif;
}
.tool {
  display: flex;
  flex: none;
  align-items: center;
  justify-content: space-between;
  width: 82px;
  padding: 1px 5px 0;
}
.tool.last {
  width: 78px;
  padding-left: 3px;
}
.tool button {
  gap: 8px;
}
.tool.last button {
  gap: 18px;
}
.drop {
  border: 3px solid transparent;
  border-top-color: #111;
  border-bottom: 0;
}
.viewer-mini {
  position: absolute;
  top: 24px;
  left: 710px;
  display: flex;
  align-items: center;
  justify-content: space-between;
  width: 46px;
  height: 12px;
  background: #f3f3f3;
  color: #888;
}

.app-header {
  display: grid;
  grid-template-columns: 1fr minmax(200px, 571px) 1fr;
  align-items: center;
  height: 40px;
  padding-bottom: 1px;
  border-bottom: 1px solid #e4e5e7;
  color: #4f545b;
}
.brand {
  display: flex;
  align-items: center;
  padding-left: 15px;
  font: 14px/20px Roboto, sans-serif;
  color: #5b6067;
}
.brand > svg {
  margin: 0 10px 0 18px;
}
.app-search {
  display: flex;
  align-items: center;
  gap: 3px;
  height: 30px;
  padding-left: 10px;
  border-radius: 4px;
  background: #f6f6f6;
  font: 9px/12px Roboto, sans-serif;
}
.app-search input::placeholder,
.task-search input::placeholder {
  color: inherit;
  opacity: 1;
}
.header-actions {
  display: flex;
  justify-content: flex-end;
  padding-right: 8px;
}
.header-actions button {
  position: relative;
  width: 30px;
  height: 30px;
}
.alert {
  position: absolute;
  top: 3px;
  right: 2px;
  width: 12px;
  height: 12px;
  border-radius: 6px;
  background: #c5221f;
  color: #fff;
  font: 8px/12px Roboto, sans-serif;
}

.app-body {
  display: flex;
  flex: 1;
  font-family: Roboto, sans-serif;
}
.sidebar {
  display: flex;
  width: 160px;
  border-right: 1px solid #e0e1e3;
}
.side-content {
  flex: 1;
}
.account {
  display: flex;
  align-items: center;
  gap: 10px;
  height: 40px;
  padding-left: 15px;
  border-bottom: 1px solid #e4e5e7;
  color: #4f545b;
}
.account p {
  font: 9px/10px Roboto, sans-serif;
  color: #3c4043;
}
.account .code {
  font-size: 8px;
  line-height: 9px;
  color: #5f6368;
}
nav {
  padding-top: 10px;
}
nav a {
  display: grid;
  grid-template-columns: 6px 15px 1fr;
  align-items: center;
  justify-items: center;
  height: 30px;
  padding-left: 9px;
  color: #3c4043;
  font-size: 9px;
  line-height: 12px;
}
nav a span {
  justify-self: start;
  padding-left: 10px;
  white-space: nowrap;
}
nav svg {
  color: #5f6368;
}
nav a.open,
nav a.open svg {
  color: #1a66d2;
}
.caret {
  border: 2px solid transparent;
  border-right: 0;
  justify-self: start;
}
.caret.shown {
  border-left: 3px solid #5f6368;
}
.caret.down {
  border: 2px solid transparent;
  border-top: 3px solid #1a66d2;
  border-bottom: 0;
}
.dot {
  width: 7px;
  height: 7px;
  border-radius: 4px;
  background: #5f6368;
}
.scroll-track {
  display: flex;
  flex-direction: column;
  align-items: center;
  width: 10px;
  padding-top: 3px;
  background: #fcfcfc;
}
.scroll-arrow {
  border: 3px solid transparent;
  border-top: 0;
  border-bottom: 5px solid #858585;
}
.scroll-thumb {
  width: 6px;
  height: 69%;
  margin-top: 3px;
  border-radius: 3px;
  background: #8b8b8b;
}

main {
  display: flex;
  flex: 1;
  flex-direction: column;
}
.page-tabs {
  display: flex;
  height: 30px;
  border-bottom: 1px solid #e4e5e7;
  color: #4f545b;
  font-size: 9px;
  line-height: 12px;
}
.page-tabs button {
  height: 30px;
  padding: 14px 23px 4px;
}
.page-tabs button[aria-selected='true'] {
  padding: 14px 15px 2px;
  border-bottom: 2px solid #1a5fd0;
  color: #202124;
  font-weight: 500;
}
h1 {
  display: flex;
  align-items: center;
  gap: 6px;
  height: 47px;
  padding-left: 15px;
  font: 14px/20px Roboto, sans-serif;
}
h1 svg,
th svg {
  color: #5f6368;
}
table {
  width: 100%;
  border: 1px solid #e4e5e7;
  border-width: 1px 1px 0 0;
  border-collapse: separate;
  border-spacing: 0;
  table-layout: fixed;
}
th,
td {
  height: 28px;
  padding: 0 0 0 10px;
  border-bottom: 1px solid #e4e5e7;
  text-align: left;
  font-size: 8px;
  line-height: 9px;
  color: #3c4043;
}
th {
  height: 26px;
  font-weight: 500;
  color: #202124;
}
th svg {
  vertical-align: middle;
}
td a {
  color: #6236c4;
}
td p {
  color: #5f6368;
}
td.ok {
  color: #1d7a3e;
}
td.bad {
  color: #c5302a;
}
footer {
  margin-top: auto;
  padding-bottom: 14px;
  text-align: center;
}
footer a {
  color: #1c3f7d;
  text-decoration: underline;
}

.status-bubble {
  position: absolute;
  bottom: 30px;
  left: 0;
  height: 14px;
  padding: 2px 4px 2px 3px;
  border-radius: 0 4px 0 0;
  background: #eee6bc;
  color: #5a5748;
  font-family: Lato, 'Open Sans', sans-serif;
}
.flap {
  position: absolute;
  align-items: flex-start;
  justify-content: flex-start;
  width: 17px;
  height: 44px;
  padding: 6px 4px;
  background: #f1f1f1;
  clip-path: polygon(0 0, 100% 0, 100% 100%, 0 62%);
}
.flap.inner {
  top: 439px;
  right: 0;
  height: 41px;
  border: 1px solid #c5c5c5;
}
.flap.outer {
  top: 469px;
  right: 0;
}
.chev {
  width: 9px;
  height: 12px;
}

.taskbar {
  display: grid;
  grid-template-columns: 1fr auto 1fr;
  align-items: center;
}
.taskbar.light {
  height: 30px;
  border-top: 1px solid #bcc0c6;
  background: #d7dfe9;
  color: #33383e;
}
.taskbar.dark {
  height: 31px;
  background: #1d2226;
  color: #f4f4f4;
}
.weather {
  display: flex;
  align-items: center;
  gap: 2px;
  padding-left: 12px;
}
.dark .weather {
  gap: 4px;
}
.w-icon {
  position: relative;
  display: flex;
}
.w-icon b {
  position: absolute;
  top: -3px;
  right: -1px;
  width: 10px;
  height: 10px;
  border-radius: 5px;
  background: #c42b1c;
  color: #fff;
  font-size: 7px;
  font-weight: 400;
  line-height: 10px;
  text-align: center;
}
.dark .w-icon b {
  background: #ff99a4;
  color: #222;
}
.weather div p:last-child {
  white-space: nowrap;
}
.dark .weather p,
.dark .tray p {
  line-height: 11px;
}
.task-center {
  display: flex;
  align-items: center;
  padding-left: 6px;
}
.start {
  width: 19px;
  margin-right: 6px;
}
.dark .start {
  margin-right: 8px;
}
.task-search {
  display: flex;
  align-items: center;
  gap: 5px;
  width: 136px;
  height: 22px;
  margin-right: 2px;
  padding: 0 4px 0 6px;
  border-radius: 11px;
  background: #f5f8fc;
  font-size: 9px;
}
.dark .task-search {
  width: 145px;
  padding-left: 8px;
  background: #3a3e42;
}
.feast {
  width: 28px;
  height: 15px;
}
.apps {
  display: flex;
  width: 302px;
}
.dark .apps {
  width: 616px;
}
.apps button {
  position: relative;
  flex: 1;
  height: 26px;
  border-radius: 3px;
}
.apps .active {
  background: #edf2f8;
}
.dark .apps .active {
  background: #30353a;
}
.apps .running::after,
.apps .active::after {
  content: '';
  position: absolute;
  bottom: 0;
  left: calc(50% - 2px);
  width: 4px;
  height: 2px;
  border-radius: 1px;
  background: #8b9096;
}
.apps .active::after {
  left: calc(50% - 5px);
  width: 10px;
  background: #1479c8;
}
.dark .apps .active::after {
  background: #4cc2f1;
}
.badge {
  position: absolute;
  top: 2px;
  right: 3px;
  width: 10px;
  height: 10px;
  border-radius: 5px;
  color: #fff;
  font-size: 6px;
  line-height: 10px;
}
.badge.green {
  background: #075044;
}
.badge.indigo {
  background: #5462bd;
}
.badge.purple {
  background: #a142c4;
}
.badge.photo {
  background: radial-gradient(circle, #d8c0b0 20%, #5b83c4 60%);
}
.badge.warm {
  background: radial-gradient(circle, #c27a3c 20%, #47606e 70%);
}
.badge.count {
  right: -1px;
  width: 18px;
  background: #4cc2f1;
  color: #16202a;
  font-size: 8px;
}
.tray {
  display: flex;
  align-items: center;
  justify-content: flex-end;
  gap: 6px;
  padding-right: 12px;
}
.lang {
  margin: 0 6px;
  text-align: center;
}
.clock {
  text-align: right;
}
.dark .clock {
  margin-left: 4px;
}
</style>
